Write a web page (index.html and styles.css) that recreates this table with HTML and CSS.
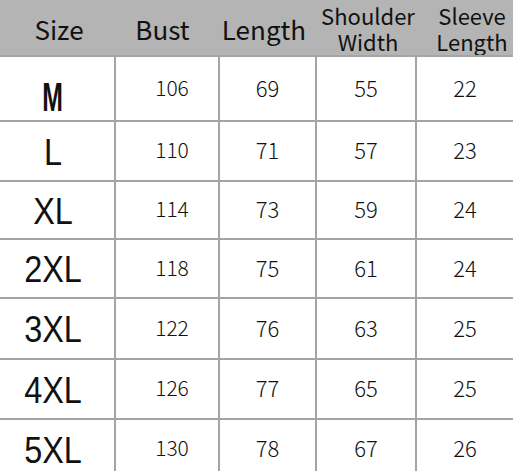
FILE: index.html
```html
<!DOCTYPE html>
<html>
<head>
<meta charset="utf-8">
<link rel="stylesheet" href="styles.css">
</head>
<body>
<div class="chart">
  <div class="hd c-size"><span>Size</span></div>
  <div class="hd c-bust">Bust</div>
  <div class="hd c-len">Length</div>
  <div class="hd c-sh two"><span class="ln">Shoulder</span><span class="ln">Width</span></div>
  <div class="hd c-sl two"><span class="ln">Sleeve</span><span class="ln">Length</span></div>

  <div class="cell sz r1"><span class="m">M</span></div>
  <div class="cell num bust r1">106</div>
  <div class="cell num r1">69</div>
  <div class="cell num r1">55</div>
  <div class="cell num last r1">22</div>

  <div class="cell sz"><span>L</span></div>
  <div class="cell num bust">110</div>
  <div class="cell num">71</div>
  <div class="cell num">57</div>
  <div class="cell num last">23</div>

  <div class="cell sz"><span>XL</span></div>
  <div class="cell num bust">114</div>
  <div class="cell num">73</div>
  <div class="cell num">59</div>
  <div class="cell num last">24</div>

  <div class="cell sz"><span>2XL</span></div>
  <div class="cell num bust">118</div>
  <div class="cell num">75</div>
  <div class="cell num">61</div>
  <div class="cell num last">24</div>

  <div class="cell sz"><span>3XL</span></div>
  <div class="cell num bust">122</div>
  <div class="cell num">76</div>
  <div class="cell num">63</div>
  <div class="cell num last">25</div>

  <div class="cell sz"><span>4XL</span></div>
  <div class="cell num bust">126</div>
  <div class="cell num">77</div>
  <div class="cell num">65</div>
  <div class="cell num last">25</div>

  <div class="cell sz"><span>5XL</span></div>
  <div class="cell num bust">130</div>
  <div class="cell num">78</div>
  <div class="cell num">67</div>
  <div class="cell num last">26</div>
</div>
</body>
</html>
```
FILE: styles.css
```css
html, body {
  margin: 0;
  padding: 0;
  background: #fff;
  overflow: hidden;
}
body {
  width: 513px;
  height: 471px;
}
.chart {
  display: grid;
  grid-template-columns: 114px 104px 97px 100px 98px;
  grid-template-rows: 55px 65px 60px 58px 59px 61px 60px 60px;
  font-family: "Noto Sans CJK SC", "Noto Sans", sans-serif;
  color: #111;
  background: linear-gradient(#b4b4b4 0, #b4b4b4 55px, #fff 55px);
}
.hd {
  display: flex;
  align-items: center;
  justify-content: center;
  font-size: 26px;
  line-height: 30px;
  padding-top: 3px;
  box-sizing: border-box;
  white-space: nowrap;
  min-width: 0;
}
.hd.c-size { padding-left: 4px; }
.hd.c-bust { padding-right: 7px; }
.hd.c-len { padding-right: 5px; }
.hd.two {
  flex-direction: column;
  font-size: 22px;
  line-height: 26px;
  padding-top: 2px;
  padding-bottom: 2px;
}
.hd.two .ln {
  display: block;
  height: 26px;
}
.hd.c-sh { padding-left: 6px; }
.hd.c-sl { padding-left: 16px; }

.cell {
  box-sizing: border-box;
  border-top: 2px solid #a4a4a4;
  display: flex;
  align-items: center;
  justify-content: center;
}
.cell + .cell:not(.sz) {
  border-left: 2px solid #a4a4a4;
}
.num {
  font-size: 22px;
  font-weight: 300;
  padding-bottom: 4px;
}
.num.bust {
  font-size: 21px;
  padding-left: 10px;
}
.sz {
  font-family: "Liberation Sans", Arial, sans-serif;
  font-size: 36px;
  padding-right: 8px;
  padding-top: 3px;
}
.sz span {
  display: inline-block;
  transform: scaleX(0.9);
}
.sz span.m {
  font-weight: bold;
  font-size: 40px;
  transform: scaleX(0.62);
  padding-top: 14px;
}
```
